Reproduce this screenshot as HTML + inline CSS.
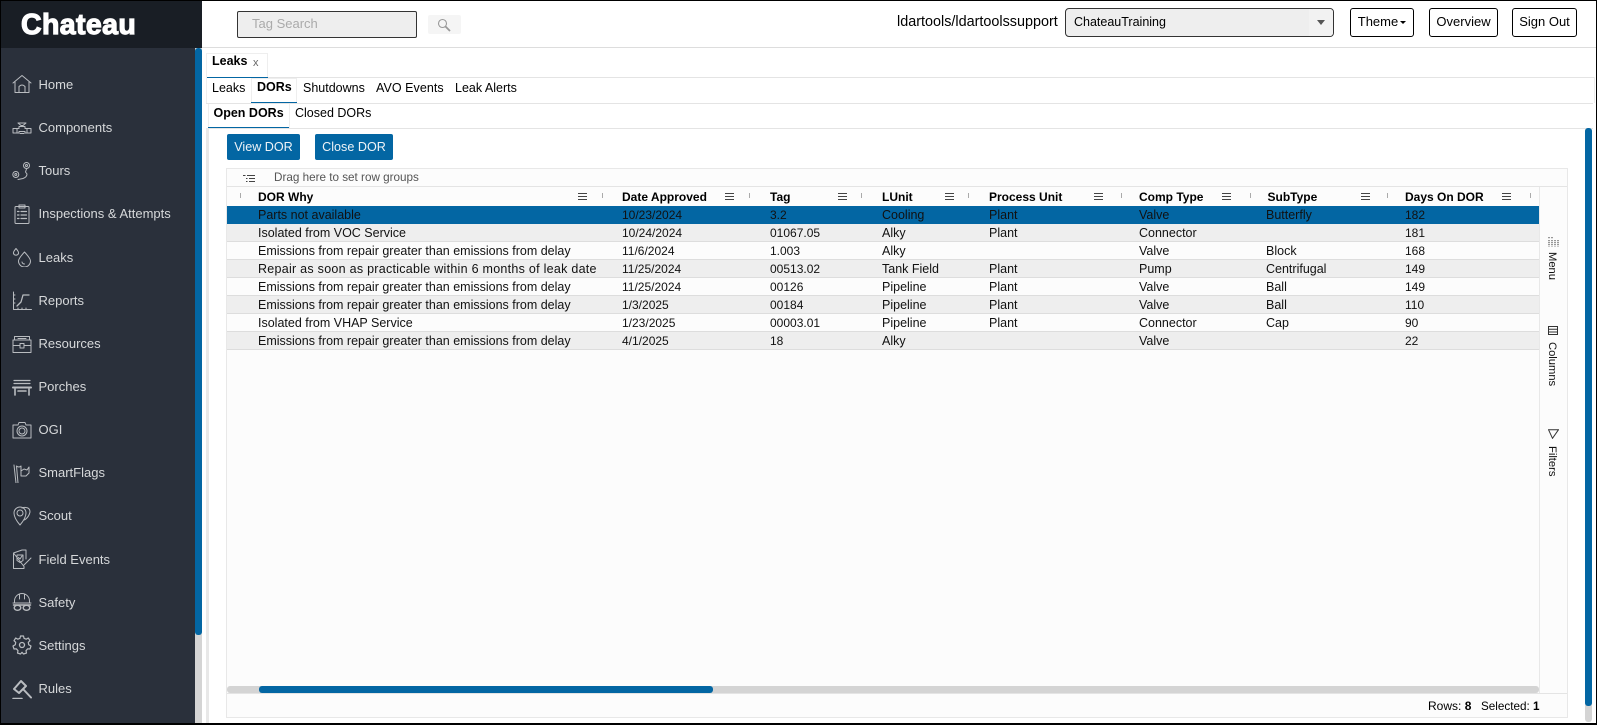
<!DOCTYPE html>
<html><head><meta charset="utf-8"><title>Chateau</title>
<style>
html,body{margin:0;padding:0;background:#fff}
body{width:1597px;height:725px;position:relative;overflow:hidden;font-family:"Liberation Sans",Arial,sans-serif;font-size:12.5px;color:#000}
div,span,svg{position:absolute;white-space:nowrap;box-sizing:border-box}
b span,span span{position:static}
.side{left:1px;top:48px;width:194px;height:677px;background:#2a303b}
.nav{left:38.5px;margin-top:1px;font-size:13px;color:#d6d8da;line-height:16px}
.ic{left:12px;width:20px;height:20px;fill:none;stroke:#b9bcc0;stroke-width:1;stroke-linejoin:round;stroke-linecap:round}
.hb{top:8px;height:29px;border:1px solid #000;border-radius:3px;background:#fff;font-size:13px;line-height:26px;text-align:center}
.ln{background:#e4e4e4;height:1px}
.blue{background:#0366a3}
.t{font-size:12.5px;line-height:16px;margin-top:1px}
.btn{top:134px;height:26px;background:#0366a3;border-radius:2px;color:#eef3f7;font-size:12.6px;line-height:27px;text-align:center}
.r{left:227px;width:1312px;height:18px;border-bottom:1px solid #ddd;background:#fcfcfc}
.r.a{background:#eee}
.r.s{background:#0366a3;border-bottom:0}
.c{top:0;font-size:12.5px;line-height:18px;color:#111}
.d{font-size:12px}
.h{top:189px;font-size:12px;font-weight:bold;line-height:16px;color:#000}
.m{top:193px;width:9px;height:7px;border-top:1px solid #444;border-bottom:1px solid #444}
.m:after{content:"";position:absolute;left:0;right:0;top:2px;height:1px;background:#444}
.g{top:193px;width:1px;height:5px;background:#aaa}
.v{left:1546px;font-size:11.2px;line-height:12px;color:#111;transform-origin:0 0;transform:translateX(12px) rotate(90deg)}
</style></head>
<body>
<!-- sidebar -->
<div style="left:0;top:0;width:202px;height:48px;background:#191e25"></div>
<div style="left:21px;top:7px;font-size:28.500px;line-height:36px;font-weight:bold;color:#fff;-webkit-text-stroke:1.2px #fff;letter-spacing:.4px">Chateau</div>
<div class="side"></div>
<div style="left:195px;top:48px;width:7px;height:677px;background:#d4d4d4"></div>
<div style="left:195px;top:48px;width:7px;height:587px;background:#0366a3;border-radius:3px"></div>

<svg class="ic" style="top:74px" viewBox="0 0 20 20"><path d="M1 9L10 1.500L19 9M3 8V18.500H17V8M7 18.500V12.500Q10 9.500 13 12.500V18.500"/></svg>
<div class="nav" style="top:76px">Home</div>
<svg class="ic" style="top:118px" viewBox="0 0 20 20"><path d="M1 10.500H7V8.500H13V10.500H19V15H13V13.500H7V15H1ZM6 5H14L11 7.500H9ZM10 7.500V8.500M5 10.500V15M15 10.500V15M8 15.500H12"/></svg>
<div class="nav" style="top:119px">Components</div>
<svg class="ic" style="top:161px" viewBox="0 0 20 20"><circle cx="3.800" cy="13.500" r="3"/><circle cx="3.800" cy="13.500" r="1"/><circle cx="14.500" cy="4.500" r="3"/><circle cx="14.500" cy="4.500" r="1"/><path d="M14.500 8L13.500 11L15 13Q15 16 11 17.500L6 18.500"/></svg>
<div class="nav" style="top:162px">Tours</div>
<svg class="ic" style="top:204px" viewBox="0 0 20 20"><rect x="3" y="2.500" width="14" height="17" rx="1"/><rect x="7" y="1" width="6" height="3"/><path d="M5.500 7.500H7M9 7.500H14.500M5.500 11H7M9 11H14.500M5.500 14.500H7M9 14.500H14.500" stroke-width="1.200"/></svg>
<div class="nav" style="top:205px">Inspections &amp; Attempts</div>
<svg class="ic" style="top:247px" viewBox="0 0 20 20"><path d="M4 1.500Q7 5 6.500 6.500A2.700 2.700 0 0 1 1.500 6.500Q1 5 4 1.500ZM12.500 5Q18.500 11.500 18.500 14A6 6 0 0 1 6.500 14Q6.500 11.500 12.500 5ZM10 15Q10.500 17 12.500 17"/></svg>
<div class="nav" style="top:249px">Leaks</div>
<svg class="ic" style="top:291px" viewBox="0 0 20 20"><path d="M1.500 1V18.500H19.500" /><path d="M5 15L9 11L11 4H17" stroke-width="1.300"/><path d="M3 4H1.500M3 8H1.500M3 12H1.500M6 18V17M10 18V17M14 18V17" /></svg>
<div class="nav" style="top:292px">Reports</div>
<svg class="ic" style="top:334px" viewBox="0 0 20 20"><path d="M2.500 6V2.500H17.500V6M1 6H19V18.500H1ZM1 11.500H8M12 11.500H19M8 9.500H12V14H8ZM6 4.500H14"/></svg>
<div class="nav" style="top:335px">Resources</div>
<svg class="ic" style="top:377px" viewBox="0 0 20 20"><path d="M2 3.500H18M2 6.500H18" stroke-width="1.200"/><path d="M1 10.500H19" stroke-width="2"/><path d="M3 12V18M17 12V18M6 14H14" stroke-width="1.600"/></svg>
<div class="nav" style="top:378px">Porches</div>
<svg class="ic" style="top:420px" viewBox="0 0 20 20"><path d="M1 5H6L7 2.500H13L14 5H19V18H1Z"/><circle cx="10" cy="11" r="5"/><circle cx="10" cy="11" r="3"/></svg>
<div class="nav" style="top:421px">OGI</div>
<svg class="ic" style="top:463px" viewBox="0 0 20 20"><path d="M2 2L4 20M6 20L4.500 3Q7 5 9 3V8M9 8L12 6L15 7L17 4V10L14 13H9Z"/></svg>
<div class="nav" style="top:464px">SmartFlags</div>
<svg class="ic" style="top:506px" viewBox="0 0 20 20"><path d="M8 19Q2 12 2 7A6 6 0 0 1 14 7Q14 12 8 19ZM10 2Q12 1 14 1.500Q18 2 18 6Q17 11 12.500 14"/><circle cx="8" cy="7" r="3"/></svg>
<div class="nav" style="top:507px">Scout</div>
<svg class="ic" style="top:549px" viewBox="0 0 20 20"><path d="M1.500 4L10 1H14V10M12 17.500V19.500H1.500V4ZM5 6H11V11.500L8 13.500L5 11.500ZM6.500 8.500L8 10L10 7M12 16L19 9"/></svg>
<div class="nav" style="top:551px">Field Events</div>
<svg class="ic" style="top:592px" viewBox="0 0 20 20"><path d="M2.500 9A7.500 7.500 0 0 1 17.500 9V11H2.500ZM1 11H19M7.500 2V7M12.500 2V7"/><path d="M1.500 13H18.500" stroke-width="1.500"/><ellipse cx="5.500" cy="15.800" rx="3.300" ry="2.500" stroke-width="1.400"/><ellipse cx="14.500" cy="15.800" rx="3.300" ry="2.500" stroke-width="1.400"/></svg>
<div class="nav" style="top:594px">Safety</div>
<svg class="ic" style="top:635px" viewBox="0 0 20 20"><circle cx="10" cy="10" r="2.500" stroke-width="1.300"/><path d="M8.500 1H11.500L12 3.300L14.200 4.200L16.300 3L18 5.700L16.300 7.300L16.700 9.700L19 11L18 14L15.700 13.800L14 15.700L14.500 18L11.500 19L10 17.300L8.500 19L5.500 18L6 15.700L4.300 13.800L2 14L1 11L3.300 9.700L3.700 7.300L2 5.700L3.700 3L5.800 4.200L8 3.300Z" stroke-width="1.200"/></svg>
<div class="nav" style="top:637px">Settings</div>
<svg class="ic" style="top:679px" viewBox="0 0 20 20"><path d="M2 10L9 2L14 7L7 14ZM11 10L19 18.500" stroke-width="2"/><path d="M1 19.500H10" stroke-width="1.500"/></svg>
<div class="nav" style="top:680px">Rules</div>
<div style="left:15px;top:723px;width:14px;height:2px;background:#b9bcc0"></div>

<!-- header -->
<div style="left:237px;top:11px;width:180px;height:27px;background:#eee;border:1px solid #333;border-radius:2px"></div>
<div class="t" style="left:252px;top:15px;font-size:13px;color:#aaa">Tag Search</div>
<div style="left:428px;top:15px;width:33px;height:19px;background:#f5f5f5;border-radius:2px"></div>
<svg style="left:437px;top:18px;width:14px;height:14px" viewBox="0 0 14 14" fill="none" stroke="#999" stroke-width="1.100"><circle cx="5.500" cy="5.500" r="4"/><path d="M8.500 8.500L13 13" stroke-width="1.800"/></svg>
<div style="left:897px;top:14px;font-size:14.400px;line-height:16px">ldartools/ldartoolssupport</div>
<div style="left:1065px;top:8px;width:269px;height:29px;background:#eee;border:1px solid #333;border-radius:4px"></div>
<div style="left:1309px;top:9px;width:24px;height:27px;background:#f2f2f2;border-radius:0 3px 3px 0"></div>
<div style="left:1074px;top:14px;font-size:12.500px;line-height:16px">ChateauTraining</div>
<div style="left:1317px;top:20px;width:0;height:0;border-left:4px solid transparent;border-right:4px solid transparent;border-top:5px solid #555"></div>
<div class="hb" style="left:1350px;width:64px;padding-right:8px">Theme</div>
<div style="left:1400px;top:21px;width:0;height:0;border-left:3px solid transparent;border-right:3px solid transparent;border-top:3px solid #000"></div>
<div class="hb" style="left:1429px;width:69px">Overview</div>
<div class="hb" style="left:1512px;width:65px">Sign Out</div>
<div style="left:202px;top:47px;width:1395px;height:1px;background:#ddd"></div>

<!-- tabs -->
<div style="left:206px;top:53px;width:62px;height:25px;border:1px solid #eee;border-bottom:0"></div>
<div style="left:212px;top:53px;font-weight:bold;font-size:12.500px;line-height:16px">Leaks</div>
<div style="left:253px;top:56px;font-size:11px;line-height:14px;color:#666">x</div>
<div class="ln" style="left:206px;top:77px;width:1389px"></div>
<div class="blue" style="left:206px;top:77px;width:62px;height:1px"></div>
<div style="left:206px;top:77px;width:1px;height:26px;background:#eee"></div>
<div style="left:1594px;top:77px;width:1px;height:26px;background:#eee"></div>
<div class="t" style="left:212px;top:79px">Leaks</div>
<div style="left:251px;top:78px;width:46px;height:25px;border:1px solid #eee;border-bottom:0"></div>
<div class="t" style="left:257px;top:78px;font-weight:bold">DORs</div>
<div class="t" style="left:303px;top:79px">Shutdowns</div>
<div class="t" style="left:376px;top:79px;letter-spacing:.05px">AVO Events</div>
<div class="t" style="left:455px;top:79px">Leak Alerts</div>
<div class="ln" style="left:206px;top:103px;width:1387px"></div>
<div class="blue" style="left:251px;top:102px;width:46px;height:1px"></div>
<div style="left:208px;top:104px;width:1px;height:24px;background:#eee"></div>
<div style="left:209px;top:104px;width:81px;height:24px;border-right:1px solid #eee"></div>
<div class="t" style="left:213.500px;top:104px;font-weight:bold">Open DORs</div>
<div class="t" style="left:295px;top:104px">Closed DORs</div>
<div class="ln" style="left:208px;top:128px;width:1385px"></div>
<div class="blue" style="left:208px;top:127px;width:81px;height:1px"></div>
<div style="left:206px;top:128px;width:3px;height:597px;background:#e8e8e8"></div>

<!-- vertical scrollbar -->
<div style="left:1585px;top:128px;width:7px;height:594px;background:#d4d4d4;border-radius:3px"></div>
<div style="left:1585px;top:128px;width:7px;height:578px;background:#0366a3;border-radius:3px"></div>

<!-- buttons -->
<div class="btn" style="left:227px;width:73px">View DOR</div>
<div class="btn" style="left:315px;width:78px">Close DOR</div>

<!-- grid -->
<div style="left:226px;top:168px;width:1342px;height:550px;background:#fcfcfc;border:1px solid #e8e8e8"></div>
<div class="ln" style="left:227px;top:186px;width:1340px"></div>
<svg style="left:243px;top:174px;width:13px;height:10px" viewBox="0 0 13 10" fill="none" stroke="#444"><path d="M4 1.500H12M6 4.500H12M6 7.500H12M0 1.500H2.500M3 4.500H4.500M3 7.500H4.500" stroke-width="1"/></svg>
<div style="left:274px;top:170px;font-size:11.700px;line-height:16px;color:#555">Drag here to set row groups</div>

<div class="g" style="left:240px"></div>
<div class="h" style="left:258px">DOR Why</div><div class="m" style="left:578px"></div>
<div class="h" style="left:622px">Date Approved</div><div class="m" style="left:725px"></div>
<div class="h" style="left:770px">Tag</div><div class="m" style="left:838px"></div>
<div class="h" style="left:882px">LUnit</div><div class="m" style="left:945px"></div>
<div class="h" style="left:989px">Process Unit</div><div class="m" style="left:1094px"></div>
<div class="h" style="left:1139px">Comp Type</div><div class="m" style="left:1222px"></div><div class="g" style="left:1121px"></div>
<div class="h" style="left:1267.500px">SubType</div><div class="m" style="left:1361px"></div><div class="g" style="left:1250px"></div>
<div class="h" style="left:1405px">Days On DOR</div><div class="m" style="left:1502px"></div><div class="g" style="left:1387px"></div><div class="g" style="left:1530px"></div>
<div class="g" style="left:602px"></div><div class="g" style="left:749px"></div><div class="g" style="left:861px"></div><div class="g" style="left:968px"></div>
<div style="left:1539px;top:187px;width:1px;height:506px;background:#e8e8e8"></div>

<div class="r s" style="top:206px"><div class="c" style="left:31px">Parts not available</div><div class="c d" style="left:395px">10/23/2024</div><div class="c d" style="left:543px">3.2</div><div class="c" style="left:655px">Cooling</div><div class="c" style="left:762px">Plant</div><div class="c" style="left:912px">Valve</div><div class="c" style="left:1039px">Butterfly</div><div class="c d" style="left:1178px">182</div></div>
<div class="r a" style="top:224px"><div class="c" style="left:31px">Isolated from VOC Service</div><div class="c d" style="left:395px">10/24/2024</div><div class="c d" style="left:543px">01067.05</div><div class="c" style="left:655px">Alky</div><div class="c" style="left:762px">Plant</div><div class="c" style="left:912px">Connector</div><div class="c d" style="left:1178px">181</div></div>
<div class="r" style="top:242px"><div class="c" style="left:31px">Emissions from repair greater than emissions from delay</div><div class="c d" style="left:395px">11/6/2024</div><div class="c d" style="left:543px">1.003</div><div class="c" style="left:655px">Alky</div><div class="c" style="left:912px">Valve</div><div class="c" style="left:1039px">Block</div><div class="c d" style="left:1178px">168</div></div>
<div class="r a" style="top:260px"><div class="c" style="left:31px;letter-spacing:.27px">Repair as soon as practicable within 6 months of leak date</div><div class="c d" style="left:395px">11/25/2024</div><div class="c d" style="left:543px">00513.02</div><div class="c" style="left:655px">Tank Field</div><div class="c" style="left:762px">Plant</div><div class="c" style="left:912px">Pump</div><div class="c" style="left:1039px">Centrifugal</div><div class="c d" style="left:1178px">149</div></div>
<div class="r" style="top:278px"><div class="c" style="left:31px">Emissions from repair greater than emissions from delay</div><div class="c d" style="left:395px">11/25/2024</div><div class="c d" style="left:543px">00126</div><div class="c" style="left:655px">Pipeline</div><div class="c" style="left:762px">Plant</div><div class="c" style="left:912px">Valve</div><div class="c" style="left:1039px">Ball</div><div class="c d" style="left:1178px">149</div></div>
<div class="r a" style="top:296px"><div class="c" style="left:31px">Emissions from repair greater than emissions from delay</div><div class="c d" style="left:395px">1/3/2025</div><div class="c d" style="left:543px">00184</div><div class="c" style="left:655px">Pipeline</div><div class="c" style="left:762px">Plant</div><div class="c" style="left:912px">Valve</div><div class="c" style="left:1039px">Ball</div><div class="c d" style="left:1178px">110</div></div>
<div class="r" style="top:314px"><div class="c" style="left:31px">Isolated from VHAP Service</div><div class="c d" style="left:395px">1/23/2025</div><div class="c d" style="left:543px">00003.01</div><div class="c" style="left:655px">Pipeline</div><div class="c" style="left:762px">Plant</div><div class="c" style="left:912px">Connector</div><div class="c" style="left:1039px">Cap</div><div class="c d" style="left:1178px">90</div></div>
<div class="r a" style="top:332px"><div class="c" style="left:31px">Emissions from repair greater than emissions from delay</div><div class="c d" style="left:395px">4/1/2025</div><div class="c d" style="left:543px">18</div><div class="c" style="left:655px">Alky</div><div class="c" style="left:912px">Valve</div><div class="c d" style="left:1178px">22</div></div>

<!-- side tabs -->
<svg style="left:1548px;top:236px;width:11px;height:11px" viewBox="0 0 11 11" fill="none" stroke="#333"><path d="M1 1V2.500M1 4V10.500M4 1V2.500M4 4V10.500M7 4V10.500M10 4V10.500" stroke-dasharray="1.200 .8"/></svg>
<div class="v" style="top:252px">Menu</div>
<svg style="left:1548px;top:326px;width:10px;height:9px" viewBox="0 0 10 9" fill="none" stroke="#333"><rect x=".5" y=".5" width="9" height="8"/><path d="M.5 3.300H9.500M.5 6H9.500"/></svg>
<div class="v" style="top:342px">Columns</div>
<svg style="left:1548px;top:429px;width:11px;height:10px" viewBox="0 0 11 10" fill="none" stroke="#333"><path d="M.5 .7H10.500L4.500 9.300Z"/></svg>
<div class="v" style="top:446px">Filters</div>

<!-- horizontal scrollbar -->
<div style="left:227px;top:686px;width:1312px;height:7px;background:#d4d4d4;border-radius:3px"></div>
<div style="left:259px;top:686px;width:454px;height:7px;background:#0366a3;border-radius:3px"></div>
<div class="ln" style="left:227px;top:693px;width:1340px"></div>
<div style="left:1428px;top:698px;font-size:12px;line-height:16px">Rows: <b>8</b></div>
<div style="left:1481px;top:699px;font-size:11.700px;line-height:16px">Selected: <b>1</b></div>

<!-- screenshot frame -->
<div style="left:0;top:0;width:1597px;height:1px;background:#000"></div>
<div style="left:0;top:0;width:1px;height:725px;background:#000"></div>
<div style="left:1596px;top:0;width:1px;height:725px;background:#000"></div>
<div style="left:0;top:723px;width:1597px;height:2px;background:#000"></div>
</body></html>
